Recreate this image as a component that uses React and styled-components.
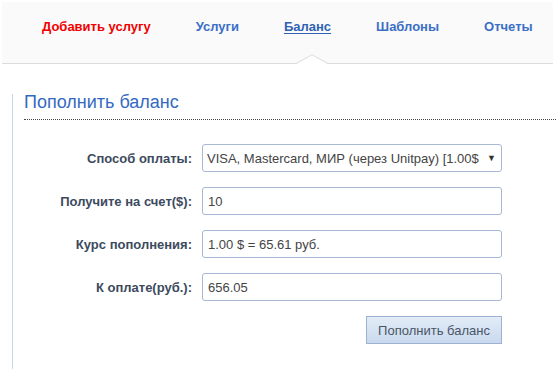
import React from "react";
import styled, { createGlobalStyle } from "styled-components";

const Global = createGlobalStyle`
  html, body {
    margin: 0;
    padding: 0;
    background: #fff;
    font-family: "Liberation Sans", Arial, sans-serif;
  }
`;

const menu = [
  { title: "Добавить услугу", kind: "add" },
  { title: "Услуги" },
  { title: "Баланс", active: true },
  { title: "Шаблоны" },
  { title: "Отчеты" },
];

function App() {
  return (
    <>
      <Global />
      <S.Header>
        <S.Nav>
          {menu.map((m) => (
            <S.NavItem key={m.title} kind={m.kind} active={m.active}>
              {m.title}
              {m.active && (
                <S.Notch width="34" height="10" viewBox="0 0 34 10">
                  <polygon points="0,10 16,1 32,10" fill="#fff" />
                  <polyline points="0,9.5 16,0.8 32,9.5" fill="none" stroke="#dcdcdc" strokeWidth="1" />
                </S.Notch>
              )}
            </S.NavItem>
          ))}
        </S.Nav>
      </S.Header>

      <S.Section>
        <S.Title>Пополнить баланс</S.Title>
        <S.Form>
          <S.Label>Способ оплаты:</S.Label>
          <S.SelectWrap>
            <S.Select defaultValue="unitpay">
              <option value="unitpay">VISA, Mastercard, МИР (через Unitpay) [1.00$ = 65.61 руб.]</option>
            </S.Select>
            <S.Arrow>▼</S.Arrow>
          </S.SelectWrap>

          <S.Label>Получите на счет($):</S.Label>
          <S.Input defaultValue="10" />

          <S.Label>Курс пополнения:</S.Label>
          <S.Input defaultValue="1.00 $ = 65.61 руб." readOnly />

          <S.Label>К оплате(руб.):</S.Label>
          <S.Input defaultValue="656.05" />

          <S.Submit type="button">Пополнить баланс</S.Submit>
        </S.Form>
      </S.Section>
    </>
  );
}

const S = {
  Header: styled.header`
    margin: 2px 3px 0 2px;
    height: 62px;
    background: #fafafa;
    border-bottom: 1px solid #dcdcdc;
    box-sizing: border-box;
  `,
  Nav: styled.nav`
    display: flex;
    gap: 45px;
    padding: 15px 0 0 40px;
    height: 100%;
    box-sizing: border-box;
  `,
  NavItem: styled.a`
    position: relative;
    height: 100%;
    white-space: nowrap;
    font-size: 13px;
    line-height: 20px;
    font-weight: bold;
    cursor: pointer;
    color: ${(p) => (p.kind === "add" ? "#f20000" : p.active ? "#2f62b4" : "#3a6fc6")};
    text-decoration: ${(p) => (p.active ? "underline" : "none")};
    text-underline-offset: 2px;
  `,
  Notch: styled.svg`
    position: absolute;
    left: 12px;
    bottom: -1px;
    display: block;
  `,
  Section: styled.section`
    margin: 30px 0 0 12px;
    border-left: 1px solid #c6d8ee;
    padding: 0 0 30px 11px;
    min-height: 245px;
  `,
  Title: styled.h2`
    margin: 0;
    font-size: 18px;
    line-height: 16px;
    font-weight: normal;
    color: #3469c2;
    padding-bottom: 9px;
    border-bottom: 1px dotted #444;
  `,
  Form: styled.div`
    display: grid;
    grid-template-columns: 168px 300px;
    grid-auto-rows: 28px;
    column-gap: 10px;
    row-gap: 15px;
    padding-top: 24px;
    align-items: center;
  `,
  Label: styled.label`
    text-align: right;
    font-size: 13px;
    font-weight: bold;
    color: #3c4a5e;
  `,
  SelectWrap: styled.div`
    position: relative;
    height: 28px;
  `,
  Select: styled.select`
    appearance: none;
    width: 100%;
    height: 28px;
    box-sizing: border-box;
    border: 1px solid #a6b8d2;
    border-radius: 3px;
    background: #fff;
    padding: 0 19px 0 4px;
    font-family: "Liberation Sans", Arial, sans-serif;
    font-size: 13px;
    color: #444;
    outline: none;
  `,
  Arrow: styled.span`
    position: absolute;
    right: 6px;
    top: 9px;
    font-size: 9px;
    line-height: 10px;
    color: #333;
    pointer-events: none;
  `,
  Input: styled.input`
    width: 100%;
    height: 28px;
    box-sizing: border-box;
    border: 1px solid #a6b8d2;
    border-radius: 3px;
    padding: 0 5px;
    font-family: "Liberation Sans", Arial, sans-serif;
    font-size: 13px;
    color: #444;
    outline: none;
  `,
  Submit: styled.button`
    grid-column: 2;
    justify-self: end;
    width: 136px;
    height: 28px;
    border: 1px solid #9cb2d1;
    background: linear-gradient(#e3ecf7, #c9d9ee);
    font-family: "Liberation Sans", Arial, sans-serif;
    font-size: 13px;
    color: #4a5566;
    cursor: pointer;
    padding: 0;
  `,
};

export default App;
